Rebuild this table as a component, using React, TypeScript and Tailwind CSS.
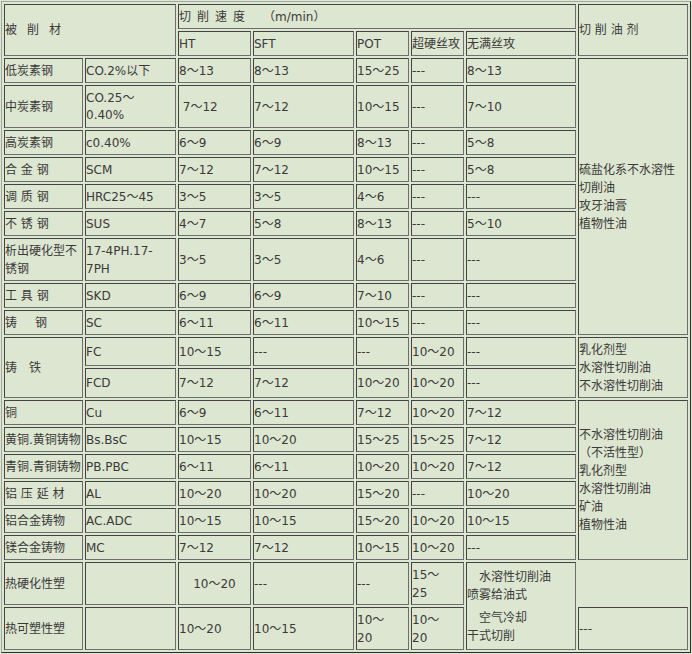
import type { ReactNode } from "react";

const base =
  "border border-t-[#434343] border-l-[#434343] border-b-[#6e6e6e] border-r-[#6e6e6e] p-0 align-middle whitespace-nowrap";

function C({
  children,
  className = "",
  rowSpan,
  colSpan,
}: {
  children?: ReactNode;
  className?: string;
  rowSpan?: number;
  colSpan?: number;
}) {
  return (
    <td rowSpan={rowSpan} colSpan={colSpan} className={`${base} ${className}`}>
      {children}
    </td>
  );
}

type Row = { name?: string; grade: ReactNode; v: ReactNode[]; h: string };

const steel: Row[] = [
  { name: "低炭素钢", grade: "CO.2%以下", v: ["8～13", "8～13", "15～25", "---", "8～13"], h: "h-[25px]" },
  {
    name: "中炭素钢",
    grade: (
      <span className="block leading-[17px]">
        CO.25～
        <br />
        0.40%
      </span>
    ),
    v: ["\u00a07～12", "7～12", "10～15", "---", "7～10"],
    h: "h-[43px]",
  },
  { name: "高炭素钢", grade: "c0.40%", v: ["6～9", "6～9", "8～13", "---", "5～8"], h: "h-[25px]" },
  { name: "合 金 钢", grade: "SCM", v: ["7～12", "7～12", "10～15", "---", "5～8"], h: "h-[25px]" },
  { name: "调 质 钢", grade: "HRC25～45", v: ["3～5", "3～5", "4～6", "---", "---"], h: "h-[25px]" },
  { name: "不 锈 钢", grade: "SUS", v: ["4～7", "5～8", "8～13", "---", "5～10"], h: "h-[25px]" },
  {
    name: "析出硬化型不\n锈钢",
    grade: (
      <span className="block leading-[18px]">
        17-4PH.17-
        <br />
        7PH
      </span>
    ),
    v: ["3～5", "3～5", "4～6", "---", "---"],
    h: "h-[43px]",
  },
  { name: "工 具 钢", grade: "SKD", v: ["6～9", "6～9", "7～10", "---", "---"], h: "h-[25px]" },
  { name: "铸\u3000\u2002钢", grade: "SC", v: ["6～11", "6～11", "10～15", "---", "---"], h: "h-[25px]" },
];

const nonFerrous: Row[] = [
  { name: "铜", grade: "Cu", v: ["6～9", "6～11", "7～12", "10～20", "7～12"], h: "h-[25px]" },
  { name: "黄铜.黄铜铸物", grade: "Bs.BsC", v: ["10～15", "10～20", "15～25", "15～25", "7～12"], h: "h-[25px]" },
  { name: "青铜.青铜铸物", grade: "PB.PBC", v: ["6～11", "6～11", "10～20", "10～20", "7～12"], h: "h-[25px]" },
  { name: "铝 压 延 材", grade: "AL", v: ["10～20", "10～20", "15～20", "---", "10～20"], h: "h-[25px]" },
  { name: "铝合金铸物", grade: "AC.ADC", v: ["10～15", "10～15", "15～20", "10～20", "10～15"], h: "h-[25px]" },
  { name: "镁合金铸物", grade: "MC", v: ["7～12", "7～12", "10～15", "10～20", "---"], h: "h-[25px]" },
];

function Name({ text }: { text: string }) {
  const parts = text.split("\n");
  if (parts.length === 1) return <>{text}</>;
  return (
    <span className="block leading-[18px]">
      {parts[0]}
      <br />
      {parts[1]}
    </span>
  );
}

function Lines({ lines }: { lines: string[] }) {
  return (
    <span className="block leading-[18px]">
      {lines.map((l, i) => (
        <span key={i} className="block">
          {l}
        </span>
      ))}
    </span>
  );
}

export default function App() {
  return (
    <div className="min-h-screen bg-[#dde6d0] pl-px pt-px text-[12px] text-[#3a3a3a] [font-family:'DejaVu_Sans','Noto_Sans_CJK_SC',sans-serif]">
      <table className="table-fixed border-separate border-spacing-[2px] border border-t-[#a4a79f] border-l-[#a4a79f] border-b-[#2c2c2c] border-r-[#2c2c2c] bg-[#dde6d0] text-left">
        <colgroup>
          <col className="w-[79px]" />
          <col className="w-[91px]" />
          <col className="w-[73px]" />
          <col className="w-[101px]" />
          <col className="w-[53px]" />
          <col className="w-[53px]" />
          <col className="w-[110px]" />
          <col className="w-[110px]" />
        </colgroup>
        <tbody>
          <tr className="h-[25px]">
            <C rowSpan={2} colSpan={2} className="tracking-[10px]">
              被削材
            </C>
            <C colSpan={5}>切{"\u2002"}削{"\u2002"}速{"\u2002"}度{"\u3000\u2002"}（m/min）</C>
            <C rowSpan={2}>切 削 油 剂</C>
          </tr>
          <tr className="h-[25px]">
            <C>HT</C>
            <C>SFT</C>
            <C>POT</C>
            <C>超硬丝攻</C>
            <C>无满丝攻</C>
          </tr>

          {steel.map((r, i) => (
            <tr key={i} className={r.h}>
              <C>
                <Name text={r.name ?? ""} />
              </C>
              <C>{r.grade}</C>
              {r.v.map((x, j) => (
                <C key={j}>{x}</C>
              ))}
              {i === 0 && (
                <C rowSpan={9}>
                  <Lines lines={["硫盐化系不水溶性", "切削油", "攻牙油膏", "植物性油"]} />
                </C>
              )}
            </tr>
          ))}

          <tr className="h-[29px]">
            <C rowSpan={2}>铸{"\u3000"}铁</C>
            <C>FC</C>
            <C>10～15</C>
            <C>---</C>
            <C>---</C>
            <C>10～20</C>
            <C>---</C>
            <C rowSpan={2}>
              <Lines lines={["乳化剂型", "水溶性切削油", "不水溶性切削油"]} />
            </C>
          </tr>
          <tr className="h-[30px]">
            <C>FCD</C>
            <C>7～12</C>
            <C>7～12</C>
            <C>10～20</C>
            <C>10～20</C>
            <C>---</C>
          </tr>

          {nonFerrous.map((r, i) => (
            <tr key={i} className={r.h}>
              <C>{r.name}</C>
              <C>{r.grade}</C>
              {r.v.map((x, j) => (
                <C key={j}>{x}</C>
              ))}
              {i === 0 && (
                <C rowSpan={6}>
                  <Lines
                    lines={["不水溶性切削油", "（不活性型）", "乳化剂型", "水溶性切削油", "矿油", "植物性油"]}
                  />
                </C>
              )}
            </tr>
          ))}

          <tr className="h-[43px]">
            <C>热硬化性塑</C>
            <C />
            <C className="text-center">10～20</C>
            <C>---</C>
            <C>---</C>
            <C>
              <span className="block leading-[18px]">
                15～
                <br />
                25
              </span>
            </C>
            <C rowSpan={2}>
              <span className="block leading-[18px]">
                <span className="block">{"\u3000"}水溶性切削油</span>
                <span className="block">喷雾给油式</span>
                <span className="mt-[5px] block">{"\u3000"}空气冷却</span>
                <span className="block">干式切削</span>
              </span>
            </C>
          </tr>
          <tr className="h-[43px]">
            <C>热可塑性塑</C>
            <C />
            <C>10～20</C>
            <C>10～15</C>
            <C>
              <span className="block leading-[18px]">
                10～
                <br />
                20
              </span>
            </C>
            <C>
              <span className="block leading-[18px]">
                10～
                <br />
                20
              </span>
            </C>
            <C>---</C>
          </tr>
        </tbody>
      </table>
    </div>
  );
}
